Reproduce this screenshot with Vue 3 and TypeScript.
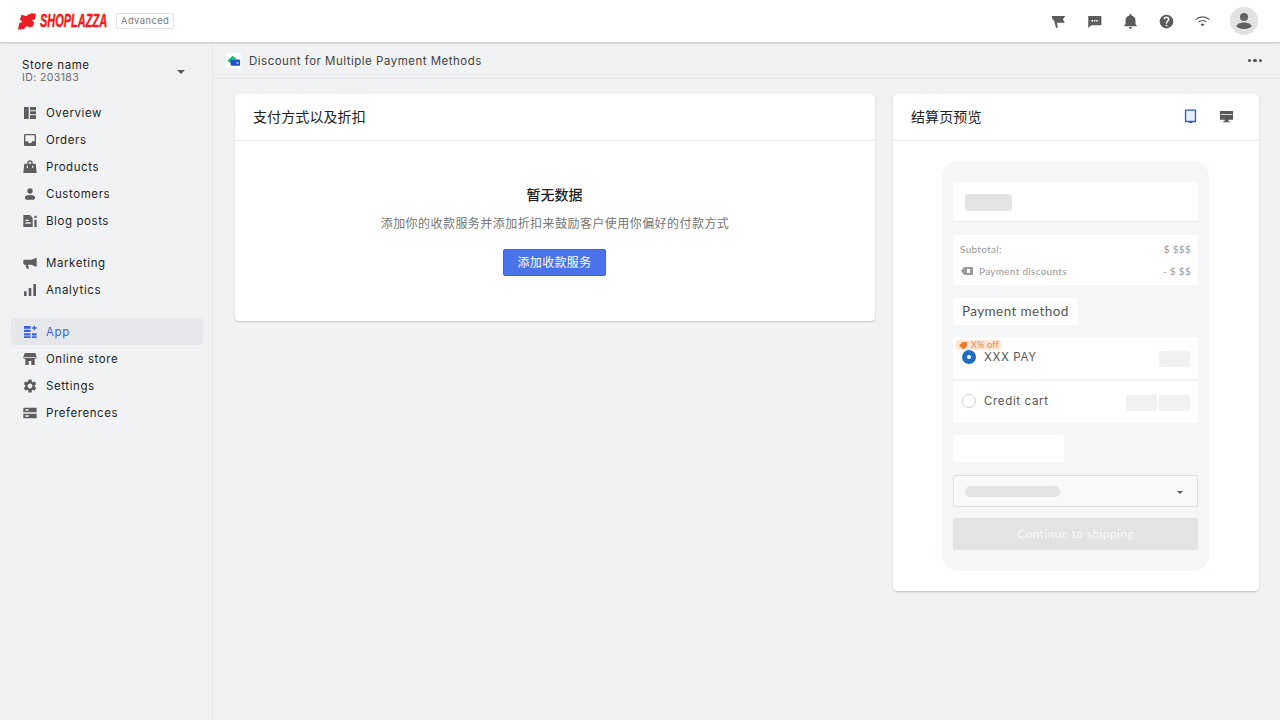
<script setup lang="ts">
interface NavItem {
  label: string
  d: string
  active?: boolean
}

// 侧边栏分三组，图标都按 24x24 画
const navGroups: NavItem[][] = [
  [
    { label: 'Overview', d: 'M3 3h7v18H3zM12 3h9v5H12zM12 9.500h9V14H12zM12 15.500h9V21H12z' },
    { label: 'Orders', d: 'M19 3H5c-1.1 0-2 .9-2 2v14c0 1.1.9 2 2 2h14c1.100 0 2-.9 2-2V5c0-1.100-.9-2-2-2zm0 11h-4c0 1.660-1.340 3-3 3s-3-1.340-3-3H5V5h14v9z' },
    { label: 'Products', d: 'M8 7V6a4 4 0 0 1 8 0v1h4.500L22 21H2L3.500 7zm2 0h4V6a2 2 0 0 0-4 0zM7 10v3h2v-3zm8 0v3h2v-3z' },
    { label: 'Customers', d: 'M12 11.500a4 4 0 1 0 0-8 4 4 0 0 0 0 8zM12 13.500c-3.500 0-7.500 1.200-7.500 3.500v1.500c0 1 1 2 2 2h11c1 0 2-1 2-2V17c0-2.300-4-3.500-7.500-3.500z' },
    { label: 'Blog posts', d: 'M2 3h10l4 4v14H2zM5 10v2h5v-2zm0 4v2h8v-2zM18.500 4h3.500v3.500h-3.500zM18.500 10h3.500v11h-3.500z' },
  ],
  [
    { label: 'Marketing', d: 'M22 4v14l-8-3.500H9l1.500 6H7L5.200 14.500H4a2 2 0 0 1-2-2V9a2 2 0 0 1 2-2h10z' },
    { label: 'Analytics', d: 'M3 14h4v7H3zM10 9h4v12h-4zM17 3h4v18h-4z' },
  ],
  [
    { label: 'App', active: true, d: 'M3 3h10v4H3zM3 8.500h10V12H3zM3 14h10v3.200H3zM3 18.200h10V21H3zM15 14h7v3.200h-7zM15 18.200h7V21h-7zM17.500 5V2.500h2V5H22v2h-2.500v2.500h-2V7H15V5z' },
    { label: 'Online store', d: 'M4 3h16l2 6c0 1.700-1.300 3-3 3v9h-5v-6h-4v6H5v-9c-1.700 0-3-1.300-3-3zM3 9h18v1H3z' },
    { label: 'Settings', d: 'M19.140 12.940c.04-.3.06-.61.06-.94 0-.32-.02-.64-.07-.94l2.030-1.580c.18-.14.23-.41.12-.61l-1.920-3.320c-.12-.22-.37-.29-.59-.22l-2.390.96c-.5-.38-1.030-.7-1.620-.94l-.36-2.540c-.04-.24-.24-.41-.48-.41h-3.840c-.24 0-.43.17-.47.41l-.36 2.540c-.59.24-1.130.57-1.620.94l-2.390-.96c-.22-.08-.47 0-.59.22L2.740 8.870c-.12.21-.08.47.12.61l2.030 1.580c-.05.3-.09.63-.09.94s.02.64.07.94l-2.030 1.580c-.18.14-.23.41-.12.61l1.920 3.320c.12.22.37.29.59.22l2.390-.96c.5.38 1.030.7 1.620.94l.36 2.540c.05.24.24.41.48.41h3.840c.24 0 .44-.17.47-.41l.36-2.540c.59-.24 1.130-.56 1.620-.94l2.390.96c.22.08.47 0 .59-.22l1.920-3.320c.12-.22.07-.47-.12-.61l-2.010-1.580zM12 15.600c-1.980 0-3.600-1.620-3.600-3.600s1.620-3.600 3.600-3.600 3.600 1.620 3.600 3.600-1.620 3.600-3.600 3.600z' },
    { label: 'Preferences', d: 'M2 4h20v7H2zM2 13h20v7H2zM5 6.500v2h5v-2zM5 15.500v2h5v-2z' },
  ],
]

const topIcons: string[] = [
  'M1 3h22l-4 5.500L22 14H9.500l1.500 8H8L4.500 9H2.500z',
  'M2 3h20a1 1 0 0 1 1 1v13a1 1 0 0 1-1 1H7l-5 4.500V4a1 1 0 0 1 0-1zM7 9.500v2.500h2.500V9.500zm3.800 0v2.500h2.500V9.500zm3.800 0v2.500h2.500V9.500z',
  'M12 23.500a2.800 2.800 0 0 0 2.800-2.800H9.200A2.800 2.800 0 0 0 12 23.500zM20 16v-6c0-3.600-2.200-6.300-6-7.100V2a2 2 0 0 0-4 0v.9C6.200 3.700 4 6.400 4 10v6l-2 2.500v1h20v-1z',
  'M12 1a11 11 0 1 0 0 22 11 11 0 0 0 0-22zm1.300 18.500h-2.600V17h2.600zm2.400-8.400-1 1c-.8.800-1.300 1.500-1.300 3h-2.600v-.6c0-1.200.5-2.300 1.300-3.100l1.400-1.400c.4-.4.6-.9.600-1.500a2.100 2.100 0 0 0-4.200 0H7.400a4.600 4.600 0 0 1 9.200 0c0 1-.4 1.900-.9 2.600z',
]
</script>

<template>
  <div class="page">
    <header class="topbar">
      <div class="brand">
        <svg class="brand-mark" viewBox="0 0 24 22">
          <path d="M4.500 2L11 3.500 14 1.500 18 0l6 .5-1.500 7.500-4 1.500 3 2-1.500 6-5.500 1-2.500-1.500L8 21l-8 1 1.500-8.500L6 11 2.500 9z" fill="#ec1c24" />
        </svg>
        <span class="brand-box"><span class="brand-name">SHOPLAZZA</span></span>
        <span class="plan">Advanced</span>
      </div>
      <div class="top-actions">
        <svg v-for="(d, i) in topIcons" :key="i" class="top-icon" viewBox="0 0 24 24">
          <path :d="d" fill-rule="evenodd" />
        </svg>
        <svg class="top-icon" viewBox="0 0 24 24">
          <path d="M1 9a16 16 0 0 1 22 0" class="wifi" />
          <path d="M5.500 13a10 10 0 0 1 13 0" class="wifi" />
          <path d="M12 20l-3.200-3.500a5 5 0 0 1 6.400 0z" />
        </svg>
        <div class="avatar">
          <svg viewBox="0 0 28 28">
            <circle cx="14" cy="10" r="4" />
            <path d="M14 15.500c-4 0-7.500 1.700-7.500 3.800 0 1 3.500 2.700 7.500 2.700s7.500-1.700 7.500-2.700c0-2.100-3.500-3.800-7.500-3.800z" />
          </svg>
        </div>
      </div>
    </header>

    <div class="body">
      <aside class="sidebar">
        <div class="store">
          <div>
            <div class="store-name">Store name</div>
            <div class="store-id">ID: 203183</div>
          </div>
          <i class="caret"></i>
        </div>
        <nav class="nav">
          <ul v-for="(group, g) in navGroups" :key="g" class="nav-group">
            <li v-for="item in group" :key="item.label" class="nav-item" :class="{ active: item.active }">
              <svg viewBox="0 0 24 24"><path :d="item.d" fill-rule="evenodd" /></svg>
              <span>{{ item.label }}</span>
            </li>
          </ul>
        </nav>
      </aside>

      <div class="content">
        <div class="subbar">
          <div class="subbar-title">
            <span class="app-icon">
              <svg viewBox="0 0 16 16">
                <path d="M1.500 8L7 3l5 4H6v5z" fill="#1fb57f" />
                <rect x="5" y="7" width="10" height="6.500" rx="1" fill="#1f4fc8" />
                <rect x="11" y="9.500" width="2.500" height="2" fill="#8fb0f0" />
              </svg>
            </span>
            <span>Discount for Multiple Payment Methods</span>
          </div>
          <div class="more"><i></i><i></i><i></i></div>
        </div>

        <main class="main">
          <section class="card methods">
            <div class="card-head">支付方式以及折扣</div>
            <div class="empty">
              <h3>暂无数据</h3>
              <p>添加你的收款服务并添加折扣来鼓励客户使用你偏好的付款方式</p>
              <button type="button" class="primary">添加收款服务</button>
            </div>
          </section>

          <section class="card preview">
            <div class="card-head">
              <span>结算页预览</span>
              <div class="devices">
                <svg viewBox="0 0 16 16" class="device">
                  <path d="M2 .500h12v13.500H9.800v1H6.200v-1H2z" fill="#2c5bd8" />
                  <rect x="3.400" y="1.900" width="9.200" height="10.700" fill="#e6edfb" />
                </svg>
                <svg viewBox="0 0 16 16" class="device">
                  <path d="M1 2h14v9.500H1zM2 5.500v1h12v-1zM6 11.500h4V13h1.500v1h-7v-1H6z" fill-rule="evenodd" />
                </svg>
              </div>
            </div>
            <div class="preview-body">
              <div class="phone">
                <div class="block shop-head"><span class="skeleton"></span></div>
                <div class="block summary">
                  <div class="sum-row"><span>Subtotal:</span><span>$ $$$</span></div>
                  <div class="sum-row">
                    <span class="discount">
                      <svg viewBox="0 0 14 10"><path d="M4 1h9v8H4L1 5z" fill="#9a9a9a" /><rect x="7" y="3" width="3" height="4" fill="#fff" /></svg>
                      Payment discounts
                    </span>
                    <span>- $ $$</span>
                  </div>
                </div>
                <div class="block pay-title">Payment method</div>
                <div class="pay-list">
                  <div class="pay-row">
                    <span class="off-tag">
                      <svg viewBox="0 0 10 10"><path d="M.5 5L4.500 1H9.500v4.500l-4 4z" fill="#f07a2c" /></svg>
                      X% off
                    </span>
                    <span class="radio on"></span>
                    <span class="pay-name">XXX PAY</span>
                    <span class="cards"><i></i></span>
                  </div>
                  <div class="pay-row">
                    <span class="radio"></span>
                    <span class="pay-name">Credit cart</span>
                    <span class="cards"><i></i><i></i></span>
                  </div>
                </div>
                <div class="block blank"></div>
                <div class="select"><span class="select-bar"></span><i class="caret small"></i></div>
                <div class="continue">Continue to shipping</div>
              </div>
            </div>
          </section>
        </main>
      </div>
    </div>
  </div>
</template>

<style>
html, body { margin: 0; background: #f1f2f4; }
</style>

<style scoped>
.page {
  height: 720px;
  display: flex;
  flex-direction: column;
  overflow: hidden;
  font-family: Inter, "Noto Sans CJK SC", sans-serif;
  color: #2b2b2b;
  background: #f1f2f4;
}
.topbar {
  height: 42px;
  flex: none;
  display: flex;
  align-items: center;
  justify-content: space-between;
  padding: 0 21px 0 18px;
  background: #fff;
  box-shadow: 0 1px 2px rgba(0, 0, 0, 0.22);
  position: relative;
  z-index: 2;
}
.brand { display: flex; align-items: center; }
.brand-mark { width: 18px; height: 17px; margin-right: 4px; }
.brand-box { width: 67px; margin-right: 9px; }
.brand-name {
  display: inline-block;
  font: italic 700 18px/1 "Liberation Sans", sans-serif;
  -webkit-text-stroke: 0.5px #ec1c24;
  color: #ec1c24;
  transform: scaleX(0.61);
  transform-origin: left center;
}
.plan {
  font-size: 9.500px;
  letter-spacing: 0.35px;
  color: #7b7b7b;
  border: 1px solid #e3e3e3;
  border-radius: 2px;
  padding: 1px 4px;
  line-height: 12px;
}
.top-actions { display: flex; align-items: center; }
.top-icon { width: 15px; height: 15px; fill: #5c5c5c; margin-right: 21px; }
.top-icon .wifi { fill: none; stroke: #5c5c5c; stroke-width: 2; }
.avatar {
  width: 28px;
  height: 28px;
  border-radius: 50%;
  background: #e2e2e2;
  margin-left: -1px;
  margin-right: 1px;
}
.avatar svg { display: block; width: 28px; height: 28px; fill: #616161; }

.body { flex: 1; display: flex; min-height: 0; }
.sidebar {
  width: 213px;
  flex: none;
  box-sizing: border-box;
  border-right: 1px solid #e6e7e9;
  padding: 15px 9px 0 11px;
}
.store {
  display: flex;
  align-items: center;
  justify-content: space-between;
  padding: 0 18px 0 11px;
  height: 27px;
  margin-bottom: 15px;
}
.store-name { font-size: 11.500px; line-height: 14px; letter-spacing: 0.55px; padding-top: 1px; color: #222; }
.store-id { font-size: 10.500px; line-height: 12px; letter-spacing: 0.4px; color: #6b6b6b; }
.caret {
  display: block;
  width: 0;
  height: 0;
  border: 4px solid transparent;
  border-top: 4px solid #5c5c5c;
  border-bottom: 0;
  margin-top: 2px;
}
.nav-group { list-style: none; margin: 0 0 15px; padding: 0; }
.nav-item {
  height: 27px;
  display: flex;
  align-items: center;
  gap: 8px;
  padding-left: 11px;
  border-radius: 4px;
  font-size: 11.500px;
  letter-spacing: 0.58px;
  color: #1f1f1f;
}
.nav-item svg { width: 16px; height: 16px; fill: #5e5e5e; flex: none; }
.nav-item.active { background: #e6e7ea; color: #3a62d8; }
.nav-item.active svg { fill: #3a62d8; }

.content { flex: 1; min-width: 0; display: flex; flex-direction: column; }
.subbar {
  height: 35px;
  margin-top: 1px;
  flex: none;
  display: flex;
  align-items: center;
  justify-content: space-between;
  padding: 0 18px 0 13px;
  border-bottom: 1px solid #e6e7e9;
  font-size: 11.500px;
  letter-spacing: 0.5px;
  color: #444;
}
.subbar-title { display: flex; align-items: center; gap: 8px; }
.app-icon { width: 15px; height: 15px; background: #fff; display: block; }
.app-icon svg { display: block; width: 15px; height: 15px; }
.more { display: flex; gap: 2px; }
.more i { width: 3.500px; height: 3.500px; border-radius: 50%; background: #555; }

.main {
  display: flex;
  align-items: flex-start;
  gap: 18px;
  padding: 15px 21px 0 22px;
}
.card {
  background: #fff;
  border-radius: 4px;
  box-shadow: 0 1px 2px rgba(0, 0, 0, 0.2);
}
.methods { flex: 1; min-width: 0; }
.preview { width: 366px; flex: none; }
.card-head {
  height: 47px;
  box-sizing: border-box;
  border-bottom: 1px solid #e9e9e9;
  display: flex;
  align-items: center;
  justify-content: space-between;
  padding: 0 18px 2px;
  font-size: 14px;
  letter-spacing: 0.1px;
  color: #222;
}
.empty { height: 180px; display: flex; flex-direction: column; align-items: center; padding-top: 45px; box-sizing: border-box; }
.empty h3 { margin: 0 1px 0 0; font-size: 14px; line-height: 18px; font-weight: 500; color: #1f1f1f; }
.empty p { margin: 11px 0 16px; font-size: 12px; line-height: 18px; letter-spacing: 0.45px; color: #757575; }
.primary {
  width: 103px;
  height: 27px;
  margin-right: 1px;
  padding: 0;
  border: 1px solid #3d63dc;
  border-radius: 2px;
  background: #4a72ea;
  color: #fff;
  font: 400 12px/1 Inter, "Noto Sans CJK SC", sans-serif;
  letter-spacing: 0.35px;
}
.devices { display: flex; gap: 21px; margin-right: 7px; align-items: center; }
.device { width: 15px; height: 15px; fill: #5a5a5a; }

.preview-body { padding: 20px 50px 20px 49px; }
.phone {
  background: #f5f6f7;
  border-radius: 16px;
  height: 410px;
  box-sizing: border-box;
  padding: 21px 11px 0;
  display: flex;
  flex-direction: column;
}
.block { background: #fff; border-radius: 2px; }
.shop-head {
  height: 39px;
  display: flex;
  align-items: center;
  padding: 1px 0 0 12px;
  box-sizing: border-box;
  box-shadow: 0 1px 0 #eaeaea;
  margin-bottom: 14px;
  flex: none;
}
.skeleton { width: 47px; height: 17px; border-radius: 3px; background: #e4e4e4; }
.summary {
  height: 50px;
  flex: none;
  margin-bottom: 13px;
  padding: 3px 7px;
  box-sizing: border-box;
  font: 10px/22px Lato, sans-serif;
  color: #979797;
}
.sum-row { display: flex; justify-content: space-between; letter-spacing: 0.3px; }
.discount { display: flex; align-items: center; gap: 5px; }
.discount svg { width: 14px; height: 10px; }
.pay-title {
  width: 125px;
  height: 27px;
  flex: none;
  box-sizing: border-box;
  padding-left: 9px;
  margin-bottom: 12px;
  font: 13.500px/27px Lato, sans-serif;
  letter-spacing: 0.4px;
  color: #555;
}
.pay-list {
  height: 86px;
  flex: none;
  display: flex;
  flex-direction: column;
  gap: 2px;
  margin-bottom: 12px;
  background: #f1f1f2;
}
.pay-row {
  flex: 1;
  position: relative;
  display: flex;
  align-items: center;
  padding: 0 8px 3px 9px;
  background: #fff;
  color: #555;
}
.off-tag {
  position: absolute;
  left: 3px;
  top: 3px;
  height: 10px;
  padding: 0 2px;
  display: flex;
  align-items: center;
  gap: 3px;
  background: #fde6d4;
  border-radius: 2px;
  font: 9px/10px Lato, sans-serif;
  letter-spacing: 0.2px;
  color: #ec8a4a;
}
.off-tag svg { width: 10px; height: 9px; }
.radio {
  width: 14px;
  height: 14px;
  box-sizing: border-box;
  border: 1px solid #d5d5d5;
  border-radius: 50%;
  background: #fff;
  flex: none;
}
.radio.on { border: 5px solid #1d6fc4; }
.pay-name { margin-left: 8px; font-size: 11.500px; letter-spacing: 0.65px; }
.cards { margin-left: auto; margin-top: 5px; display: flex; gap: 2px; }
.cards i { width: 31px; height: 16px; background: #f1f1f2; border-radius: 2px; display: block; }
.blank { width: 111px; height: 27px; flex: none; margin-bottom: 13px; }
.select {
  height: 32px;
  flex: none;
  box-sizing: border-box;
  margin-bottom: 11px;
  display: flex;
  align-items: center;
  justify-content: space-between;
  padding: 0 14px 0 11px;
  border: 1px solid #dedede;
  border-radius: 2px;
  background: #f9f9f9;
}
.select-bar { width: 95px; height: 11px; border-radius: 6px; background: #e4e4e4; }
.caret.small { border-width: 3.500px; border-bottom: 0; }
.continue {
  height: 32px;
  flex: none;
  border-radius: 2px;
  background: #e3e3e3;
  color: #fafafa;
  text-align: center;
  font: 12px/32px Lato, sans-serif;
  letter-spacing: 0.35px;
}
</style>
